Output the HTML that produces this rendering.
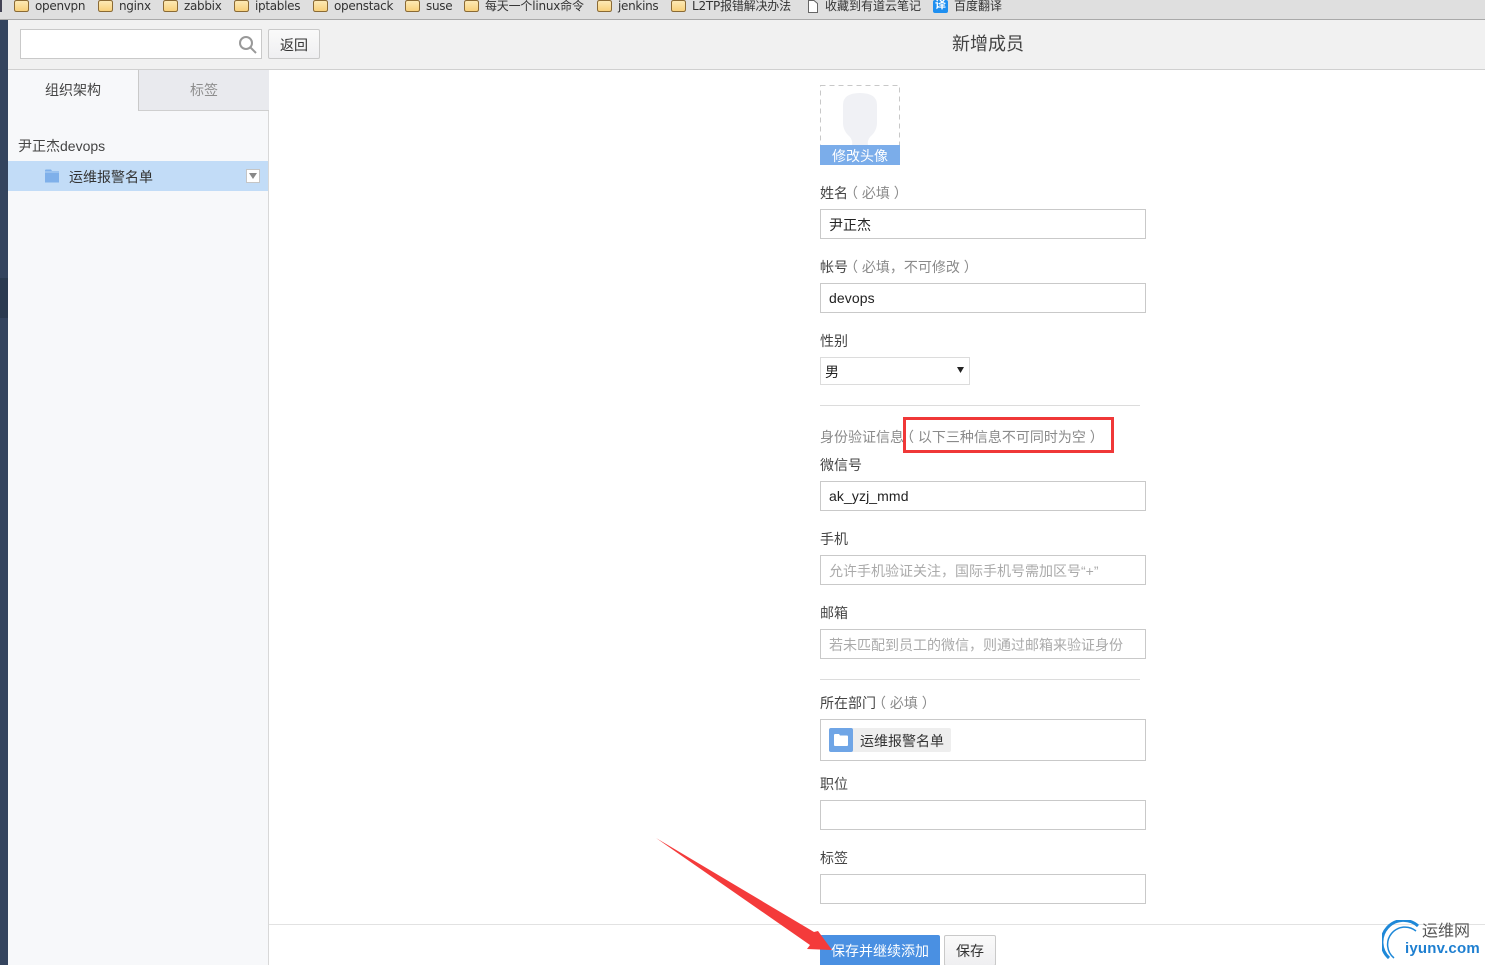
<!DOCTYPE html>
<html lang="zh"><head><meta charset="utf-8"><title>新增成员</title>
<style>
html,body{margin:0;padding:0;background:#fff}
#p{position:relative;width:1485px;height:965px;overflow:hidden;background:#fff;font-family:"Liberation Sans","Noto Sans CJK SC",sans-serif;font-size:14px;color:#333}
#p div,#p span.a,#p svg{position:absolute}
.t{white-space:nowrap;line-height:20px}
.b{white-space:nowrap;line-height:14px;top:-1px;font-family:"DejaVu Sans","Noto Sans CJK SC",sans-serif;font-size:12px;color:#333;letter-spacing:-.3px}
.i{left:820px;width:324px;height:28px;border:1px solid #c9c9c9;background:#fff;line-height:28px;text-indent:8px;white-space:nowrap;color:#222}
.c{line-height:30px}
.ph{color:#aaa}
.l{left:820px;white-space:nowrap;line-height:22px;color:#444}
.l.gg{color:#8a8a8a}
.g{color:#8a8a8a;margin-left:-4px}
.k{font-family:"Noto Sans CJK TC",sans-serif}
</style></head><body><div id="p">

<!-- bookmarks bar -->
<div style="left:0;top:0;width:1485px;height:19px;background:#dfdfdf"></div>
<div style="left:0;top:19px;width:1485px;height:1px;background:#a9a9a9"></div>
<div style="left:0;top:0;width:2px;height:12px;background:#445"></div>
<svg style="left:0;top:0" width="960" height="19">
<defs><linearGradient id="y" x1="0" y1="0" x2="0" y2="1"><stop offset="0" stop-color="#fdeab8"/><stop offset="1" stop-color="#f8cf78"/></linearGradient>
<g id="f"><path d="M.5 2.5Q.5 .5 2.5 .5H12.5Q14.5 .5 14.5 2.5V9.500Q14.500 11.500 12.500 11.500H2.500Q.5 11.500 .5 9.500Z" fill="url(#y)" stroke="#8a6a35"/></g></defs>
<use href="#f" x="14"/><use href="#f" x="98"/><use href="#f" x="163"/><use href="#f" x="234"/><use href="#f" x="313"/><use href="#f" x="405"/><use href="#f" x="464"/><use href="#f" x="597"/><use href="#f" x="671"/>
<path d="M808.500 .5H814L817.500 3.500V12.500H808.500Z" fill="#fff" stroke="#666"/>
<rect x="933" y="0" width="15" height="13" rx="2" fill="#1e8ff0"/>
</svg>
<div style="left:935px;top:-2px;font-size:11px;line-height:14px;color:#fff;font-weight:bold">译</div>
<div class="b" style="left:35px">openvpn</div>
<div class="b" style="left:119px">nginx</div>
<div class="b" style="left:184px">zabbix</div>
<div class="b" style="left:255px">iptables</div>
<div class="b" style="left:334px">openstack</div>
<div class="b" style="left:426px">suse</div>
<div class="b" style="left:485px;letter-spacing:-.2px">每天一个linux命令</div>
<div class="b" style="left:618px">jenkins</div>
<div class="b" style="left:692px;letter-spacing:-.2px">L2TP报错解决办法</div>
<div class="b" style="left:825px;letter-spacing:0">收藏到有道云笔记</div>
<div class="b" style="left:954px;letter-spacing:0">百度翻译</div>

<!-- left dark strip -->
<div style="left:0;top:20px;width:8px;height:945px;background:#34445e"></div>
<div style="left:0;top:278px;width:8px;height:40px;background:#2b3a50"></div>

<!-- top toolbar -->
<div style="left:8px;top:20px;width:1477px;height:49px;background:#f1f1f1"></div>
<div style="left:8px;top:69px;width:1477px;height:1px;background:#d0d0d0"></div>
<div style="left:20px;top:29px;width:240px;height:28px;background:#fff;border:1px solid #c9c9c9"></div>
<svg style="left:238px;top:35px" width="20" height="20" fill="none" stroke="#999" stroke-width="2"><circle cx="8" cy="8" r="6"/><path d="M12.500 12.500L18 18"/></svg>
<div style="left:268px;top:29px;width:50px;height:28px;background:linear-gradient(#fafafa,#efeff1);border:1px solid #c9c9c9;border-radius:2px;text-align:center;line-height:30px;color:#333">返回</div>
<div class="t" style="left:952px;top:32px;font-size:18px;line-height:24px;color:#444">新增成员</div>

<!-- sidebar -->
<div style="left:8px;top:70px;width:260px;height:895px;background:#f7f8fa"></div>
<div style="left:268px;top:70px;width:1px;height:895px;background:#d8d8d8"></div>
<div style="left:138px;top:70px;width:130px;height:40px;background:#e9eaee;border-left:1px solid #c9c9c9;border-bottom:1px solid #cfcfcf"></div>
<div class="t" style="left:45px;top:80px;color:#444">组织架构</div>
<div class="t" style="left:190px;top:80px;color:#8d8d8d">标签</div>
<div class="t" style="left:18px;top:136px;color:#444">尹正杰devops</div>
<div style="left:8px;top:161px;width:260px;height:30px;background:#c2dcf7"></div>
<svg style="left:45px;top:169px" width="14" height="14"><path d="M0 1.500Q0 .5 1 .5H6L7 2H14V13.500H0Z" fill="#7fb0ea"/><path d="M0 3H14" stroke="#c2dcf7" stroke-width=".8"/></svg>
<div class="t" style="left:69px;top:167px;color:#333">运维报警名单</div>
<div style="left:246px;top:169px;width:12px;height:12px;background:#fff;border:1px solid #c5c5c5"></div>
<svg style="left:249px;top:173px" width="8" height="6"><path d="M0 0H8L4 6Z" fill="#888"/></svg>

<!-- avatar -->
<svg style="left:820px;top:85px" width="80" height="80">
<rect x=".5" y=".5" width="79" height="79" fill="#fff" stroke="#c8c8c8" stroke-dasharray="5 4"/>
<path d="M23 20Q23 8 40 8Q57 8 57 20V38Q57 46 50 52Q47 56 48 60H32Q33 56 30 52Q23 46 23 38Z" fill="#f0f1f5"/>
<rect x="0" y="60" width="80" height="20" fill="#7badea"/>
</svg>
<div class="t" style="left:820px;top:146px;width:80px;text-align:center;color:#fff">修改头像</div>

<!-- form -->
<div class="l" style="top:182px">姓名<span class="g">（ 必填 ）</span></div>
<div class="i c" style="top:209px">尹正杰</div>
<div class="l" style="top:256px">帐号<span class="g">（ 必填<span class="k">，</span>不可修改 ）</span></div>
<div class="i" style="top:283px;letter-spacing:.1px">devops</div>
<div class="l" style="top:330px">性别</div>
<div style="left:820px;top:357px;width:148px;height:26px;border:1px solid #dcdcdc;background:#fff;line-height:29px;text-indent:4px;color:#222">男</div>
<svg style="left:957px;top:367px" width="7" height="6"><path d="M0 0H7L3.500 6Z" fill="#222"/></svg>
<div style="left:820px;top:405px;width:320px;height:1px;background:#dcdcdc"></div>
<div class="l gg" style="top:426px">身份验证信息<span class="g">（ 以下三种信息不可同时为空 ）</span></div>
<div style="left:903px;top:417px;width:205px;height:30px;border:3px solid #f03838;background:transparent"></div>
<div class="l" style="top:454px">微信号</div>
<div class="i" style="top:481px;letter-spacing:.1px">ak_yzj_mmd</div>
<div class="l" style="top:528px">手机</div>
<div class="i ph c" style="top:555px">允许手机验证关注<span class="k">，</span>国际手机号需加区号“+”</div>
<div class="l" style="top:602px">邮箱</div>
<div class="i ph c" style="top:629px">若未匹配到员工的微信<span class="k">，</span>则通过邮箱来验证身份</div>
<div style="left:820px;top:679px;width:320px;height:1px;background:#dcdcdc"></div>
<div class="l" style="top:692px">所在部门<span class="g">（ 必填 ）</span></div>
<div style="left:820px;top:719px;width:324px;height:40px;border:1px solid #c9c9c9;background:#fff"></div>
<div style="left:829px;top:728px;width:122px;height:24px;background:#eeeeee;border-radius:2px"></div>
<div style="left:829px;top:728px;width:24px;height:24px;background:#6fa5e6;border-radius:2px"></div>
<svg style="left:834px;top:734px" width="14" height="12"><path d="M0 1Q0 0 1 0H5L6 1.500H13Q14 1.500 14 2.500V11Q14 12 13 12H1Q0 12 0 11Z" fill="#fff"/></svg>
<div class="t" style="left:860px;top:731px;color:#333">运维报警名单</div>
<div class="l" style="top:773px">职位</div>
<div class="i" style="top:800px"></div>
<div class="l" style="top:847px">标签</div>
<div class="i" style="top:874px"></div>

<!-- footer -->
<div style="left:269px;top:924px;width:1216px;height:1px;background:#e2e2e2"></div>
<div style="left:820px;top:935px;width:120px;height:30px;background:#4a90e2;border-radius:2px 2px 0 0;text-align:center;line-height:32px;color:#fff">保存并继续添加</div>
<div style="left:944px;top:935px;width:50px;height:29px;border:1px solid #c9c9c9;border-radius:2px;background:linear-gradient(#fafafa,#efeff1);text-align:center;line-height:30px;color:#333">保存</div>

<!-- red arrow -->
<svg style="left:0;top:0" width="1485" height="965"><path d="M656 838L814 932L818 931L832 950L807 949L810 945Z" fill="#f43b3b"/></svg>

<!-- watermark -->
<svg style="left:1382px;top:920px" width="46" height="40" fill="none" stroke="#1e88d8"><path d="M7 38A19 19 0 0 1 36 6" stroke-width="3"/><path d="M12 38A15 15 0 0 1 34 11" stroke-width="1.500"/></svg>
<div class="t" style="left:1422px;top:922px;color:#555;font-size:16px">运维网</div>
<div class="t" style="left:1405px;top:939px;color:#1e7fd0;font-size:15px;font-weight:bold;letter-spacing:.2px">iyunv.com</div>

</div></body></html>
